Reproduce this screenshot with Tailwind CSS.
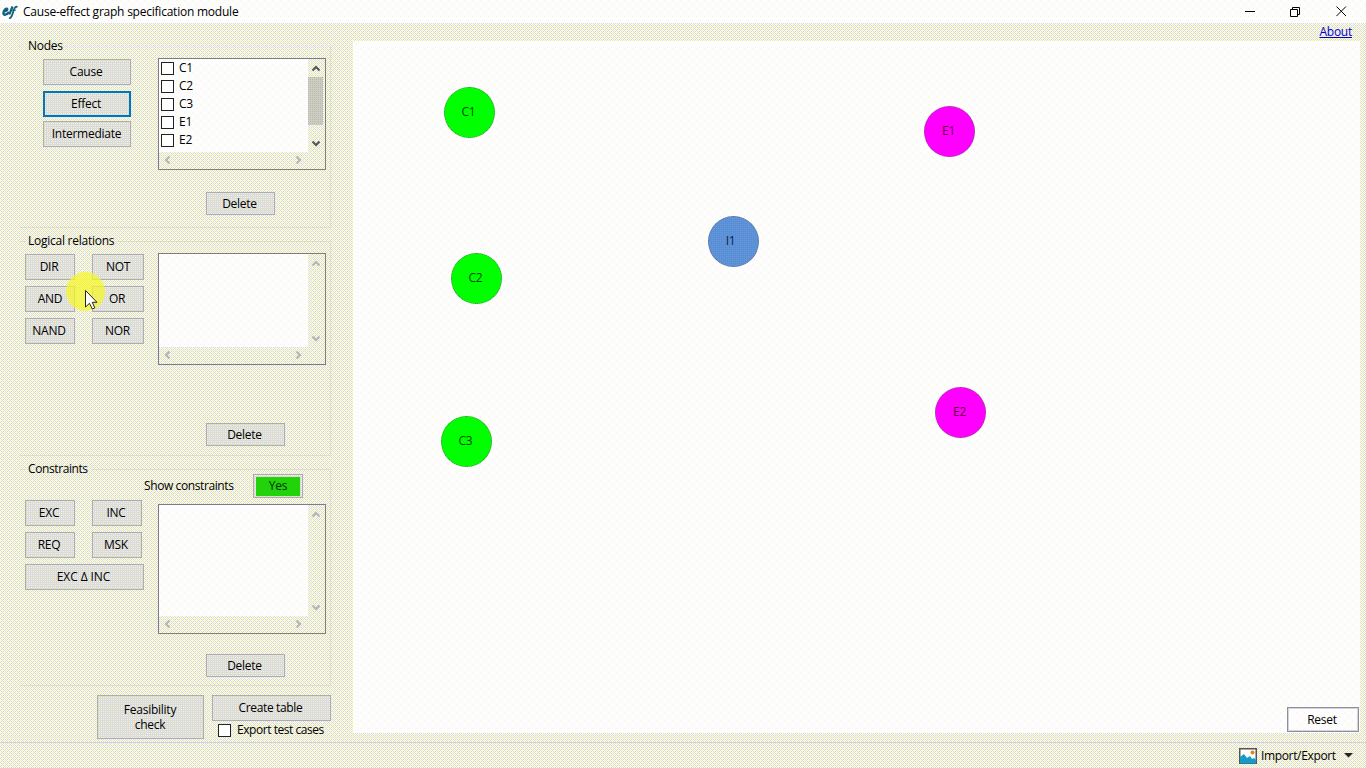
<!DOCTYPE html>
<html lang="en">
<head>
<meta charset="utf-8">
<title>Cause-effect graph specification module</title>
<script src="https://cdn.jsdelivr.net/npm/@tailwindcss/browser@4"></script>
<style>
/* dithered surfaces */
.dots{background-color:#fdfdff;background-image:conic-gradient(at 1px 1px,transparent 75%,#ffff90 0),conic-gradient(at 1px 1px,transparent 75%,#ffff90 0);background-size:8px 8px;background-position:0 0,4px 4px;background-attachment:fixed}
.face{background-color:#fafafa;background-image:conic-gradient(at 1px 1px,transparent 75%,#ffff60 0),conic-gradient(at 1px 1px,transparent 75%,#ffff60 0),conic-gradient(at 1px 1px,transparent 75%,#dcdccc 0),conic-gradient(at 1px 1px,transparent 75%,#d8d8e0 0);background-size:4px 4px,4px 4px,2px 2px,2px 2px;background-position:0 0,2px 2px,0 0,1px 1px;background-attachment:fixed}
.btn{display:flex;align-items:center;justify-content:center;padding-bottom:1px;border:1px solid #adadad;background-color:#dadada;background-image:conic-gradient(at 1px 1px,transparent 75%,#e6e6a0 0),conic-gradient(at 1px 1px,transparent 75%,#f0f0ea 0);background-size:4px 4px,2px 2px;background-position:0 0,1px 1px;background-attachment:fixed}
.thumb{background-color:#cdcdc4;background-image:conic-gradient(at 1px 1px,transparent 75%,#b8b8a8 0);background-size:2px 2px}
</style>
</head>
<body class="face w-[1366px] h-[768px] overflow-hidden flex flex-col font-['Open_Sans','Noto_Sans',sans-serif] text-[12px] leading-[15px] tracking-[-0.25px] text-black">
<svg class="hidden"><defs>
<g id="up"><path d="M0.5 5.5L4 2L7.5 5.5" fill="none" stroke="currentColor" stroke-width="2"/></g>
</defs></svg>
<header class="dots h-[23px] shrink-0 flex items-center">
  <svg class="ml-[2px] mr-[5px]" width="16" height="18" viewBox="0 0 16 18"><g fill="none" stroke="#10607f"><path d="M1 8.3C5 8.4 6 6 4.8 5.8C2.5 5.5 0 11.500 2.500 11.700C4.500 11.800 6 10.500 7 9" stroke-width="2.400"/><path d="M10.500 3.500L7.300 11.500" stroke-width="2.200"/><path d="M15.500 4C12.500 2.500 11.500 8 10.500 11C9.700 13.500 8.500 15.500 7 15" stroke-width="1.800"/><path d="M9.500 7.200H14" stroke-width="1"/></g></svg>
  <span class="whitespace-nowrap tracking-[-0.23px]">Cause-effect graph specification module</span>
  <svg class="ml-auto" width="121" height="22" viewBox="0 0 121 22" fill="none" stroke="#000"><path d="M0 10.500H10"/><path d="M45.500 8.500H52.500V15.500H45.500ZM47.500 8.500V6.500H54.500V13.500H52.500"/><path d="M91.500 5.500L101 15M101 5.500L91.500 15"/></svg>
</header>
<div class="flex h-[719px] shrink-0">
  <aside class="w-[353px] shrink-0 pl-[19px] pt-[23px]">
    <section class="relative w-[312px] h-[182px] border border-[#dcdcdc] border-dotted">
      <h2 class="face absolute left-[5px] -top-[9px] px-[3px]">Nodes</h2>
      <div class="flex pt-[11px] pl-[23px]">
        <div class="flex flex-col w-[88px] mt-px">
          <button class="btn h-[26px] pr-[2px]">Cause</button>
          <button class="btn h-[26px] pr-[2px] mt-[6px] border-2! border-[#0078b7]!">Effect</button>
          <button class="btn h-[26px] pr-px mt-[4px]">Intermediate</button>
        </div>
        <div class="ml-[27px] w-[168px] h-[112px] border border-[#7c7c86] flex flex-col">
          <div class="flex h-[93px]">
            <ul class="dots w-[149px] pl-[2px]">
              <li class="h-[18px] pt-px flex items-start"><i class="size-[13px] mt-[2px] mr-[5px] border border-[#222] bg-white"></i>C1</li>
              <li class="h-[18px] pt-px flex items-start"><i class="size-[13px] mt-[2px] mr-[5px] border border-[#222] bg-white"></i>C2</li>
              <li class="h-[18px] pt-px flex items-start"><i class="size-[13px] mt-[2px] mr-[5px] border border-[#222] bg-white"></i>C3</li>
              <li class="h-[18px] pt-px flex items-start"><i class="size-[13px] mt-[2px] mr-[5px] border border-[#222] bg-white"></i>E1</li>
              <li class="h-[18px] pt-px flex items-start"><i class="size-[13px] mt-[2px] mr-[5px] border border-[#222] bg-white"></i>E2</li>
            </ul>
            <div class="face w-[17px] pr-[2px] flex flex-col items-center text-[#555]">
              <svg class="mt-[6px]" width="8" height="8"><use href="#up"/></svg>
              <div class="thumb w-[15px] h-[48px] mt-[4px]"></div>
              <svg class="mt-auto mb-[5px] rotate-180" width="8" height="8"><use href="#up"/></svg>
            </div>
          </div>
          <div class="face flex-1 flex items-center justify-between pl-[5px] pr-[23px] pb-[2px] text-[#b4b4b4]"><svg class="-rotate-90" width="8" height="8"><use href="#up"/></svg><svg class="rotate-90" width="8" height="8"><use href="#up"/></svg></div>
        </div>
      </div>
      <button class="btn ml-[186px] mt-[22px] w-[69px] h-[23px] pr-[2px] pb-0!">Delete</button>
    </section>
    <section class="relative w-[312px] h-[215px] mt-[13px] border border-[#dcdcdc] border-dotted">
      <h2 class="face absolute left-[5px] -top-[9px] px-[3px]">Logical relations</h2>
      <div class="flex pt-[11px] pl-[5px]">
        <div class="grid grid-cols-[50px_52px] gap-x-[17px] gap-y-[6px] auto-rows-[26px] mt-px">
          <button class="btn pr-[2px]">DIR</button><button class="btn">NOT</button>
          <button class="btn">AND</button><button class="btn pr-[2px]">OR</button>
          <button class="btn pr-[2px]">NAND</button><button class="btn pr-px">NOR</button>
        </div>
        <div class="ml-[14px] w-[168px] h-[112px] border border-[#7c7c86] flex flex-col">
          <div class="flex h-[93px]">
            <div class="dots w-[149px]"></div>
            <div class="face w-[17px] pr-[2px] flex flex-col items-center justify-between pt-[6px] pb-[5px] text-[#b4b4b4]"><svg width="8" height="8"><use href="#up"/></svg><svg class="rotate-180" width="8" height="8"><use href="#up"/></svg></div>
          </div>
          <div class="face flex-1 flex items-center justify-between pl-[5px] pr-[23px] pb-[2px] text-[#b4b4b4]"><svg class="-rotate-90" width="8" height="8"><use href="#up"/></svg><svg class="rotate-90" width="8" height="8"><use href="#up"/></svg></div>
        </div>
      </div>
      <button class="btn ml-[186px] mt-[58px] w-[79px] h-[23px] pr-[2px] pb-0!">Delete</button>
      <!-- click highlight and mouse pointer -->
      <svg class="absolute left-[45px] top-[29px]" width="42" height="44" viewBox="0 0 42 44"><circle cx="20.500" cy="20.500" r="19.500" fill="#f6f624" fill-opacity=".72"/><path d="M20.500 19.500V36L24.500 32.300L27.300 38L29.800 36.900L27.300 31.300H32Z" fill="#fff" stroke="#222"/></svg>
    </section>
    <section class="relative w-[312px] h-[217px] mt-[13px] border border-[#dcdcdc] border-dotted">
      <h2 class="face absolute left-[5px] -top-[9px] px-[3px] tracking-[-0.4px]">Constraints</h2>
      <div class="flex items-center pl-[124px] pt-[4px]"><span class="w-[109px] whitespace-nowrap pb-px tracking-[-0.4px]">Show constraints</span><button class="btn w-[50px] h-[24px] p-[2px]"><span class="flex-1 h-[19px] leading-[18px] bg-[#22d30c] text-[#022e02]">Yes</span></button></div>
      <div class="flex pl-[5px]">
        <div class="grid grid-cols-[50px_52px] gap-x-[17px] gap-y-[6px] auto-rows-[26px] mt-[2px] content-start">
          <button class="btn pr-[2px]">EXC</button><button class="btn w-[50px] pr-[2px]">INC</button>
          <button class="btn pr-[2px]">REQ</button><button class="btn w-[50px] pr-[2px]">MSK</button>
          <button class="btn col-span-2 pr-[2px] tracking-[-0.1px]">EXC Δ INC</button>
        </div>
        <div class="ml-[14px] mt-[6px] w-[168px] h-[130px] border border-[#7c7c86] flex flex-col">
          <div class="flex h-[111px]">
            <div class="dots w-[149px]"></div>
            <div class="face w-[17px] pr-[2px] flex flex-col items-center justify-between pt-[6px] pb-[5px] text-[#b4b4b4]"><svg width="8" height="8"><use href="#up"/></svg><svg class="rotate-180" width="8" height="8"><use href="#up"/></svg></div>
          </div>
          <div class="face flex-1 flex items-center justify-between pl-[5px] pr-[23px] pb-[2px] text-[#b4b4b4]"><svg class="-rotate-90" width="8" height="8"><use href="#up"/></svg><svg class="rotate-90" width="8" height="8"><use href="#up"/></svg></div>
        </div>
      </div>
      <button class="btn ml-[186px] mt-[20px] w-[79px] h-[23px] pr-[2px] pb-0!">Delete</button>
    </section>
    <div class="flex pl-[78px] mt-[9px] gap-[8px]">
      <button class="btn w-[107px] h-[44px] pl-[20px] pr-[21px] pb-0!">Feasibility check</button>
      <div class="w-[119px]">
        <button class="btn w-full h-[26px] pr-[2px] tracking-[-0.35px]">Create table</button>
        <label class="flex items-center ml-[6px] mt-[1px] gap-[6px] whitespace-nowrap tracking-[-0.45px]"><i class="size-[13px] mt-[1px] border border-[#222] bg-white"></i>Export test cases</label>
      </div>
    </div>
  </aside>
  <main class="flex-1">
    <div class="h-[18px] flex justify-end pr-[14px]"><a class="underline text-[#0000d4] leading-[18px]">About</a></div>
    <div class="dots relative w-[1007px] h-[692px]">
      <div class="absolute left-[91px] top-[46px] size-[51px] rounded-full border border-dotted border-[#557755] bg-[#00ff00] text-[#064006] flex items-center justify-center pr-[2px] pb-[2px]">C1</div>
      <div class="absolute left-[98px] top-[212px] size-[51px] rounded-full border border-dotted border-[#557755] bg-[#00ff00] text-[#064006] flex items-center justify-center pr-[2px] pb-[2px]">C2</div>
      <div class="absolute left-[88px] top-[375px] size-[51px] rounded-full border border-dotted border-[#557755] bg-[#00ff00] text-[#064006] flex items-center justify-center pr-[2px] pb-[2px]">C3</div>
      <div class="absolute left-[355px] top-[175px] size-[51px] rounded-full border border-dotted border-[#66667a] bg-[#5590e0] bg-[conic-gradient(at_1px_1px,transparent_75%,#7498bc_0)] bg-size-[2px_2px] bg-fixed text-[#102040] flex items-center justify-center pr-[6px] pb-[2px]">I1</div>
      <div class="absolute left-[571px] top-[65px] size-[51px] rounded-full border border-dotted border-[#775577] bg-[#ff00ff] text-[#600030] flex items-center justify-center pr-[2px] pb-[2px]">E1</div>
      <div class="absolute left-[582px] top-[346px] size-[51px] rounded-full border border-dotted border-[#775577] bg-[#ff00ff] text-[#600030] flex items-center justify-center pr-[2px] pb-[2px]">E2</div>
      <button class="dots absolute left-[934px] top-[666px] w-[72px] h-[25px] border border-[#8f8f9a] outline-1 -outline-offset-2 outline-[#d4d4dc] pr-[2px]">Reset</button>
    </div>
  </main>
</div>
<footer class="h-[26px] shrink-0 border-t border-[#d2d2d8] flex items-center pl-[1239px]">
  <svg width="18" height="16" viewBox="0 0 18 16"><path d="M.75.75H17.250V15.250H.75Z" fill="#fff" stroke="#555" stroke-width="1.500"/><circle cx="13.500" cy="4.500" r="2" fill="#d8891c"/><path d="M1 9L5 6L8 10L11 8L13 11L15 10L17 12V15.500H1Z" fill="#149bc9"/></svg>
  <span class="ml-[4px] w-[83px] whitespace-nowrap tracking-[-0.35px]">Import/Export</span>
  <svg width="9" height="5"><path d="M0 0H9L4.500 4.500Z" fill="#222"/></svg>
</footer>
</body>
</html>
